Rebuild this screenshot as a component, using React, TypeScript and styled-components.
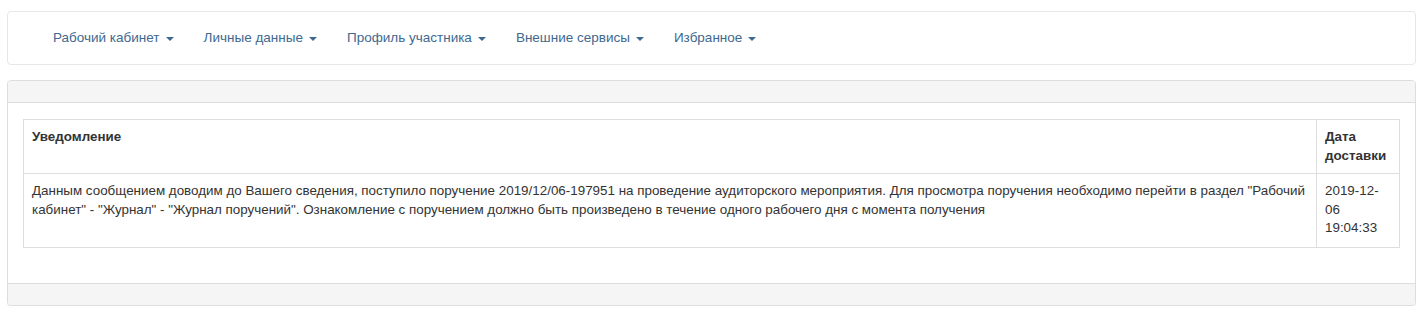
import React from 'react'
import styled, { createGlobalStyle } from 'styled-components'

const GlobalStyle = createGlobalStyle`
  body {
    margin: 0;
    background: #fff;
    font-family: "Liberation Sans", Arial, sans-serif;
    font-size: 13.4px;
    line-height: 18.6px;
    color: #333;
  }
`

const Page = styled.div`
  padding: 11px 11px 0 7px;
`

const Navbar = styled.nav`
  display: flex;
  align-items: center;
  gap: 30px;
  height: 52px;
  border: 1px solid #e7e7e7;
  border-radius: 4px;
  background: #fff;
  padding-left: 45px;
  margin-bottom: 15px;
`

const NavItem = styled.a`
  display: flex;
  align-items: center;
  font-size: 13.5px;
  color: #40698f;
  text-decoration: none;
  cursor: pointer;
`

const Caret = styled.span`
  display: inline-block;
  width: 0;
  height: 0;
  margin-left: 6px;
  margin-top: 1px;
  border-top: 4px solid #40698f;
  border-left: 4px solid transparent;
  border-right: 4px solid transparent;
`

const Panel = styled.div`
  border: 1px solid #ddd;
  border-radius: 4px;
  background: #fff;
  box-shadow: 0 1px 1px rgba(0, 0, 0, 0.05);
  overflow: hidden;
`

const PanelBar = styled.div<{ $top?: boolean }>`
  height: 21px;
  background: #f5f5f5;
  border-${(p) => (p.$top ? 'bottom' : 'top')}: 1px solid #ddd;
`

const PanelBody = styled.div`
  padding: 16px 15px 15px;
`

const Table = styled.table`
  width: 100%;
  border-collapse: collapse;
  margin-bottom: 20px;
  border: 1px solid #ddd;
`

const Th = styled.th<{ $narrow?: boolean }>`
  text-align: left;
  vertical-align: top;
  font-weight: bold;
  padding: 8px;
  border: 1px solid #ddd;
  width: ${(p) => (p.$narrow ? '66px' : 'auto')};
`

const Td = styled.td`
  vertical-align: top;
  padding: 8px 8px 9px;
  border: 1px solid #ddd;
`

const NAV = ['Рабочий кабинет', 'Личные данные', 'Профиль участника', 'Внешние сервисы', 'Избранное']

export default function App() {
  return (
    <>
      <GlobalStyle />
      <Page>
        <Navbar>
          {NAV.map((item) => (
            <NavItem key={item}>
              {item}
              <Caret />
            </NavItem>
          ))}
        </Navbar>
        <Panel>
          <PanelBar $top />
          <PanelBody>
            <Table>
              <thead>
                <tr>
                  <Th>Уведомление</Th>
                  <Th $narrow>Дата доставки</Th>
                </tr>
              </thead>
              <tbody>
                <tr>
                  <Td>
                    Данным сообщением доводим до Вашего сведения, поступило поручение 2019/12/06-197951 на
                    проведение аудиторского мероприятия. Для просмотра поручения необходимо перейти в раздел
                    "Рабочий кабинет" - "Журнал" - "Журнал поручений". Ознакомление с поручением должно быть
                    произведено в течение одного рабочего дня с момента получения
                  </Td>
                  <Td>2019-12-06 19:04:33</Td>
                </tr>
              </tbody>
            </Table>
          </PanelBody>
          <PanelBar />
        </Panel>
      </Page>
    </>
  )
}
